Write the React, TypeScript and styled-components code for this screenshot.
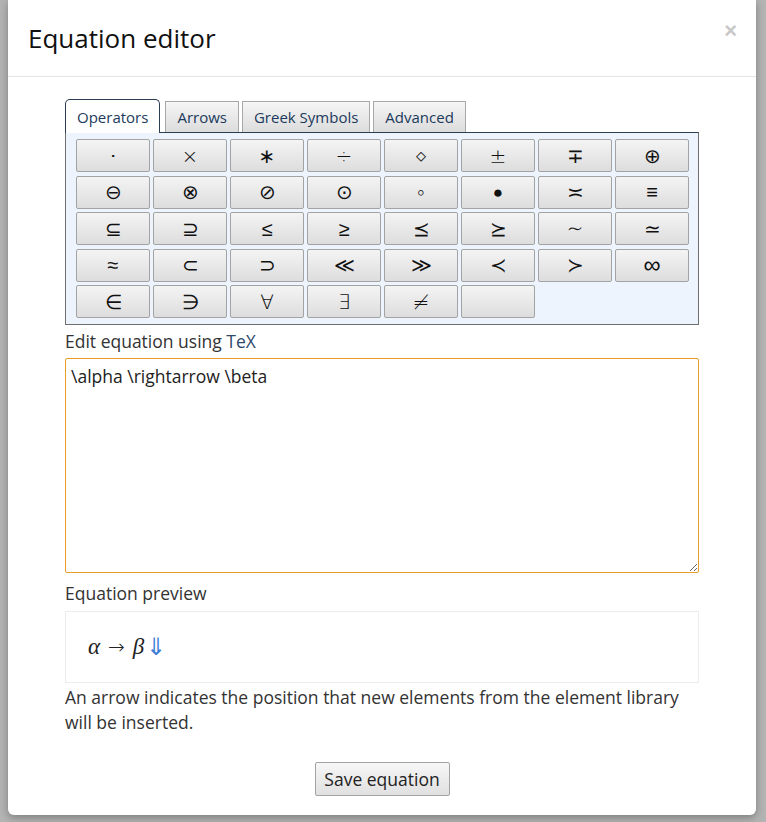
import React from "react";
import styled, { createGlobalStyle } from "styled-components";

const GlobalStyle = createGlobalStyle`
    html, body {
        margin: 0;
        padding: 0;
        background: #b4b4b4;
        font-family: "Open Sans", "Noto Sans", sans-serif;
        color: #333;
    }
`;

const Page = styled.div`
    padding: 0 10px 0 8px;
    height: 822px;
    overflow: hidden;
`;

const Dialog = styled.div`
    width: 748px;
    height: 815px;
    background: #fff;
    border-radius: 0 0 6px 6px;
    box-shadow: 0 3px 9px rgba(0, 0, 0, 0.3);
    display: flex;
    flex-direction: column;
`;

const Header = styled.div`
    height: 76px;
    border-bottom: 1px solid #e5e5e5;
    display: flex;
    align-items: center;
    padding: 0 19px 0 20px;
`;

const Title = styled.h4`
    margin: 0;
    font-size: 26px;
    font-weight: 400;
    color: #111;
    flex: 1;
`;

const Close = styled.button`
    border: none;
    background: none;
    padding: 0;
    margin-top: -14px;
    font-size: 22px;
    font-weight: 700;
    color: #c8c8c8;
    font-family: "Liberation Sans", sans-serif;
`;

const Body = styled.div`
    padding: 21px 57px 0;
    display: flex;
    flex-direction: column;
`;

const TabBar = styled.div`
    display: flex;
    align-items: flex-end;
    gap: 3px;
    height: 34px;
`;

const Tab = styled.div<{ $active?: boolean }>`
    height: ${(p) => (p.$active ? 34 : 31)}px;
    box-sizing: border-box;
    padding: 0 11px;
    display: flex;
    align-items: center;
    font-size: 15px;
    color: #1b3a5c;
    border: 1px solid ${(p) => (p.$active ? "#2b3d52" : "#a8a8a8")};
    border-bottom: none;
    border-radius: ${(p) => (p.$active ? "5px 5px 0 0" : "0")};
    background: ${(p) => (p.$active ? "#fff" : "linear-gradient(#f6f6f6, #dcdcdc)")};
    margin-bottom: ${(p) => (p.$active ? -1 : 0)}px;
    margin-right: ${(p) => (p.$active ? 2 : 0)}px;
    position: relative;
`;

const Panel = styled.div`
    border: 1px solid #6f6f6f;
    border-top-color: #2b3d52;
    background: #edf4fd;
    padding: 6px 9px 6px 10px;
    display: grid;
    grid-template-columns: repeat(8, 74px);
    column-gap: 3px;
    row-gap: 3.5px;
`;

const SymbolButton = styled.button<{ $size?: number; $weight?: number }>`
    height: 33px;
    padding: 0;
    border: 1px solid #a3a3a3;
    border-radius: 2px;
    background: linear-gradient(#f4f4f4, #dddddd);
    font-family: "DejaVu Sans", sans-serif;
    font-weight: ${(p) => p.$weight ?? 200};
    font-size: ${(p) => p.$size ?? 20}px;
    color: #111;
    display: flex;
    align-items: center;
    justify-content: center;
`;

const Label = styled.div`
    font-size: 17.5px;
    line-height: 24px;
    margin-top: 4px;
    color: #333;
`;

const TexLetters = styled.span`
    color: #2d4a6b;
`;

const TexArea = styled.textarea`
    margin-top: 5px;
    height: 215px;
    box-sizing: border-box;
    border: 1px solid #e6a02a;
    border-radius: 2px;
    padding: 5px 5px;
    font-family: "Open Sans", sans-serif;
    font-size: 17.5px;
    color: #222;
    resize: vertical;
    outline: none;
`;

const PreviewLabel = styled(Label)`
    margin-top: 8px;
`;

const Preview = styled.div`
    margin-top: 6px;
    height: 72px;
    box-sizing: border-box;
    border: 1px solid #ececec;
    padding: 0 22px;
    display: flex;
    align-items: center;
    font-family: "Liberation Serif", "DejaVu Serif", serif;
    font-size: 22px;
    color: #222;
    gap: 8px;
`;

const MathVar = styled.span`
    font-style: italic;
    font-family: "Liberation Serif", serif;
    font-size: 23px;
`;

const Arrow = styled.span`
    font-family: "DejaVu Sans", sans-serif;
    font-weight: 200;
    font-size: 20px;
`;

const Cursor = styled.span`
    color: #3b7dd8;
    font-family: "DejaVu Sans", sans-serif;
    font-weight: 200;
    font-size: 24px;
    margin-left: -6px;
`;

const Note = styled.p`
    margin: 2px 0 0;
    font-size: 17.5px;
    line-height: 25px;
    color: #333;
`;

const Footer = styled.div`
    display: flex;
    justify-content: center;
    margin-top: 27px;
`;

const SaveButton = styled.button`
    width: 135px;
    height: 34px;
    border: 1px solid #a3a3a3;
    border-radius: 2px;
    background: linear-gradient(#f7f7f7, #e0e0e0);
    font-family: "Open Sans", sans-serif;
    font-size: 17.5px;
    color: #222;
    padding: 0;
`;

type Sym = { s: string; size?: number; weight?: number };

const rows: Sym[][] = [
    [
        { s: "\u22C5" },
        { s: "\u00D7" },
        { s: "\u2217", weight: 400 },
        { s: "\u00F7" },
        { s: "\u22C4" },
        { s: "\u00B1" },
        { s: "\u2213" },
        { s: "\u2295" },
    ],
    [
        { s: "\u2296" },
        { s: "\u2297" },
        { s: "\u2298" },
        { s: "\u2299" },
        { s: "\u2218" },
        { s: "\u25CF", size: 17 },
        { s: "\u224D" },
        { s: "\u2261" },
    ],
    [
        { s: "\u2286" },
        { s: "\u2287" },
        { s: "\u2264" },
        { s: "\u2265" },
        { s: "\u2AAF" },
        { s: "\u2AB0" },
        { s: "\u223C", size: 26 },
        { s: "\u2243" },
    ],
    [
        { s: "\u2248" },
        { s: "\u2282" },
        { s: "\u2283" },
        { s: "\u226A" },
        { s: "\u226B" },
        { s: "\u227A" },
        { s: "\u227B" },
        { s: "\u221E", size: 24 },
    ],
    [{ s: "\u2208" }, { s: "\u220B" }, { s: "\u2200" }, { s: "\u2203" }, { s: "\u2260" }, { s: "" }],
];

const tabs = ["Operators", "Arrows", "Greek Symbols", "Advanced"];

export default function App() {
    return (
        <>
            <GlobalStyle />
            <Page>
                <Dialog>
                    <Header>
                        <Title>Equation editor</Title>
                        <Close>×</Close>
                    </Header>
                    <Body>
                        <TabBar>
                            {tabs.map((t, i) => (
                                <Tab key={t} $active={i === 0}>
                                    {t}
                                </Tab>
                            ))}
                        </TabBar>
                        <Panel>
                            {rows.flat().map((sym, i) => (
                                <SymbolButton key={i} $size={sym.size} $weight={sym.weight}>
                                    {sym.s}
                                </SymbolButton>
                            ))}
                        </Panel>
                        <Label>
                            Edit equation using <TexLetters>TeX</TexLetters>
                        </Label>
                        <TexArea defaultValue={"\\alpha \\rightarrow \\beta"} />
                        <PreviewLabel>Equation preview</PreviewLabel>
                        <Preview>
                            <MathVar>α</MathVar>
                            <Arrow>→</Arrow>
                            <MathVar>β</MathVar>
                            <Cursor>⇓</Cursor>
                        </Preview>
                        <Note>
                            An arrow indicates the position that new elements from the element library will be
                            inserted.
                        </Note>
                        <Footer>
                            <SaveButton>Save equation</SaveButton>
                        </Footer>
                    </Body>
                </Dialog>
            </Page>
        </>
    );
}
